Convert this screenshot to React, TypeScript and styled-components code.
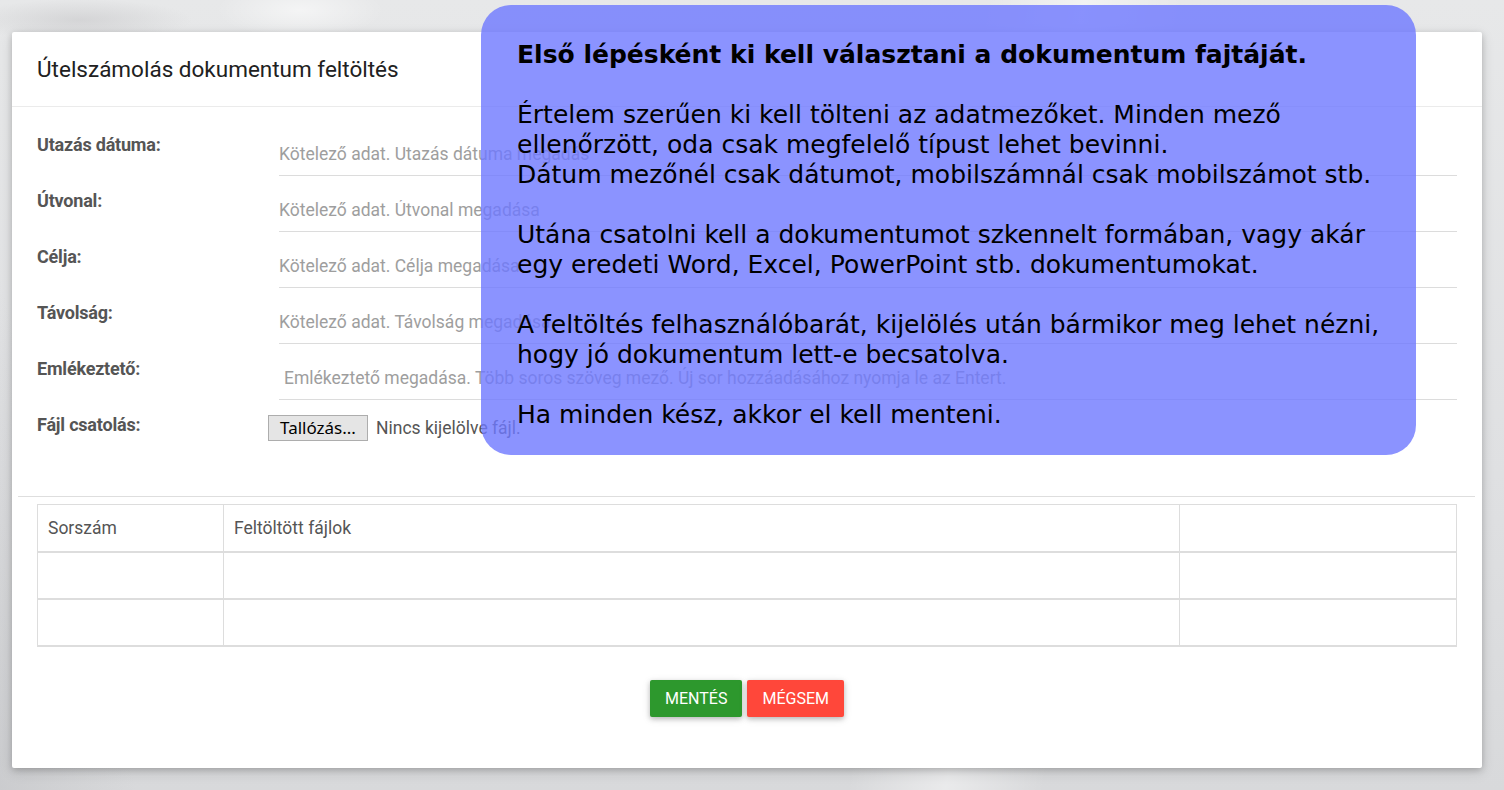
import React from "react";
import styled, { createGlobalStyle } from "styled-components";

const GlobalStyle = createGlobalStyle`
  html, body {
    margin: 0;
    padding: 0;
    height: 100%;
  }
  body {
    font-family: Roboto, "Liberation Sans", Arial, sans-serif;
    background-color: #e3e4e6;
    background-image:
      radial-gradient(ellipse 120px 40px at 300px 10px, rgba(255,255,255,0.55), rgba(255,255,255,0) 70%),
      radial-gradient(ellipse 160px 30px at 80px 20px, rgba(200,200,202,0.6), rgba(200,200,202,0) 70%),
      linear-gradient(100deg, rgba(255,255,255,0) 60%, rgba(255,255,255,0.45) 66%, rgba(255,255,255,0) 72%),
      linear-gradient(75deg, rgba(190,191,194,0.5) 0%, rgba(190,191,194,0) 8%),
      linear-gradient(180deg, #e7e8e9 0%, #dfe0e2 60%, #d8d9db 100%);
    overflow: hidden;
  }
  #root {
    width: 1504px;
    height: 790px;
  }
`;

const Page = styled.div`
  position: relative;
  box-sizing: border-box;
  width: 1504px;
  height: 790px;
  padding: 32px 22px 22px 12px;
`;

const Card = styled.div`
  box-sizing: border-box;
  width: 1470px;
  height: 736px;
  background: #ffffff;
  border-radius: 2px;
  box-shadow: 0 2px 6px rgba(0, 0, 0, 0.18), 0 4px 14px rgba(0, 0, 0, 0.12);
  display: flex;
  flex-direction: column;
`;

const CardHeader = styled.div`
  box-sizing: border-box;
  height: 75px;
  padding: 0 25px;
  display: flex;
  align-items: center;
  border-bottom: 1px solid #ebebeb;
`;

const Title = styled.h2`
  margin: 0;
  font-family: Roboto, sans-serif;
  font-weight: 400;
  font-size: 22.5px;
  color: #212121;
  padding-bottom: 1px;
`;

const FormBody = styled.div`
  padding: 26px 25px 0 25px;
  display: flex;
  flex-direction: column;
  gap: 13px;
`;

const Row = styled.div`
  display: grid;
  grid-template-columns: 242px 1fr;
  align-items: start;
`;

const Label = styled.label`
  font-family: Roboto, sans-serif;
  font-weight: 700;
  font-size: 18px;
  line-height: 22px;
  color: #555555;
  margin-top: 1px;
  letter-spacing: -0.2px;
`;

const TextInput = styled.input`
  box-sizing: border-box;
  width: 100%;
  height: 43px;
  border: none;
  border-bottom: 1px solid #dcdcdc;
  padding: 0;
  font-family: Roboto, sans-serif;
  font-size: 17.5px;
  color: #333;
  background: transparent;
  outline: none;
  &::placeholder {
    color: #9e9e9e;
  }
`;

const TextArea = styled.textarea`
  box-sizing: border-box;
  width: 100%;
  height: 43px;
  border: none;
  border-bottom: 1px solid #dcdcdc;
  padding: 10px 5px 0 5px;
  resize: none;
  font-family: Roboto, sans-serif;
  font-size: 17.5px;
  line-height: 22px;
  color: #333;
  background: transparent;
  outline: none;
  overflow: hidden;
  &::placeholder {
    color: #9e9e9e;
  }
`;

const FileWrap = styled.div`
  display: flex;
  align-items: center;
  gap: 8px;
  margin-left: -11px;
  margin-top: 2px;
`;

const BrowseButton = styled.button`
  box-sizing: border-box;
  width: 100px;
  height: 26px;
  padding: 0;
  border: 1px solid #adadad;
  border-radius: 0;
  background: #e5e5e5;
  font-family: "Noto Sans", "DejaVu Sans", sans-serif;
  font-size: 17px;
  line-height: 22px;
  color: #000;
  cursor: pointer;
`;

const FileStatus = styled.span`
  font-family: Roboto, sans-serif;
  font-size: 17.5px;
  color: #555555;
`;

const Divider = styled.hr`
  margin: 55px 7px 0 6px;
  border: none;
  border-top: 1px solid #dedede;
  height: 0;
`;

const TableWrap = styled.div`
  padding: 7px 25px 0 25px;
`;

const Table = styled.table`
  width: 100%;
  border-collapse: collapse;
  border: 1px solid #dddddd;
  font-family: Roboto, sans-serif;
  font-size: 17.5px;
  color: #555555;
  table-layout: fixed;
`;

const Th = styled.th<{ $w?: number }>`
  ${(p) => (p.$w ? `width: ${p.$w}px;` : "")}
  box-sizing: border-box;
  height: 47px;
  padding: 0 10px;
  text-align: left;
  font-weight: 400;
  border: 1px solid #dddddd;
  border-bottom: 2px solid #dddddd;
`;

const Td = styled.td`
  box-sizing: border-box;
  height: 47px;
  padding: 0 10px;
  border: 1px solid #dddddd;
  border-bottom: 2px solid #dddddd;
`;

const Actions = styled.div`
  display: flex;
  justify-content: center;
  gap: 5px;
  margin-top: 33px;
`;

const ActionButton = styled.button<{ $color: string }>`
  box-sizing: border-box;
  height: 37px;
  padding: 0 15px;
  border: none;
  border-radius: 2px;
  background: ${(p) => p.$color};
  color: #ffffff;
  font-family: Roboto, sans-serif;
  font-size: 16px;
  font-weight: 400;
  text-transform: uppercase;
  box-shadow: 0 2px 5px rgba(0, 0, 0, 0.22), 0 2px 10px rgba(0, 0, 0, 0.1);
  cursor: pointer;
`;

const HelpBubble = styled.div`
  position: absolute;
  left: 481px;
  top: 5px;
  box-sizing: border-box;
  width: 935px;
  height: 450px;
  padding: 35px 20px 0 36px;
  border-radius: 30px;
  background: rgba(110, 120, 255, 0.8);
  color: #000000;
  font-family: "DejaVu Sans", Verdana, sans-serif;
  font-size: 25px;
  line-height: 30px;
`;

const HelpTitle = styled.p`
  margin: 0 0 30px 0;
  font-weight: 700;
`;

const HelpPara = styled.p`
  margin: 0 0 30px 0;
  font-weight: 400;
`;

const fields = [
  { label: "Utazás dátuma:", placeholder: "Kötelező adat. Utazás dátuma megadás" },
  { label: "Útvonal:", placeholder: "Kötelező adat. Útvonal megadása" },
  { label: "Célja:", placeholder: "Kötelező adat. Célja megadása" },
  { label: "Távolság:", placeholder: "Kötelező adat. Távolság megadása" },
];

export default function App() {
  return (
    <>
      <GlobalStyle />
      <Page>
        <Card>
          <CardHeader>
            <Title>Útelszámolás dokumentum feltöltés</Title>
          </CardHeader>
          <FormBody>
            {fields.map((f) => (
              <Row key={f.label}>
                <Label>{f.label}</Label>
                <TextInput placeholder={f.placeholder} />
              </Row>
            ))}
            <Row>
              <Label>Emlékeztető:</Label>
              <TextArea placeholder="Emlékeztető megadása. Több soros szöveg mező. Új sor hozzáadásához nyomja le az Entert." />
            </Row>
            <Row>
              <Label>Fájl csatolás:</Label>
              <FileWrap>
                <BrowseButton type="button">Tallózás...</BrowseButton>
                <FileStatus>Nincs kijelölve fájl.</FileStatus>
              </FileWrap>
            </Row>
          </FormBody>
          <Divider />
          <TableWrap>
            <Table>
              <thead>
                <tr>
                  <Th $w={186}>Sorszám</Th>
                  <Th>Feltöltött fájlok</Th>
                  <Th $w={277}></Th>
                </tr>
              </thead>
              <tbody>
                <tr>
                  <Td />
                  <Td />
                  <Td />
                </tr>
                <tr>
                  <Td />
                  <Td />
                  <Td />
                </tr>
              </tbody>
            </Table>
          </TableWrap>
          <Actions>
            <ActionButton $color="#2d982d">Mentés</ActionButton>
            <ActionButton $color="#ff473a">Mégsem</ActionButton>
          </Actions>
        </Card>
        <HelpBubble>
          <HelpTitle>Első lépésként ki kell választani a dokumentum fajtáját.</HelpTitle>
          <HelpPara>
            Értelem szerűen ki kell tölteni az adatmezőket. Minden mező
            <br />
            ellenőrzött, oda csak megfelelő típust lehet bevinni.
            <br />
            Dátum mezőnél csak dátumot, mobilszámnál csak mobilszámot stb.
          </HelpPara>
          <HelpPara>
            Utána csatolni kell a dokumentumot szkennelt formában, vagy akár
            <br />
            egy eredeti Word, Excel, PowerPoint stb. dokumentumokat.
          </HelpPara>
          <HelpPara>
            A feltöltés felhasználóbarát, kijelölés után bármikor meg lehet nézni,
            <br />
            hogy jó dokumentum lett-e becsatolva.
          </HelpPara>
          <HelpPara>Ha minden kész, akkor el kell menteni.</HelpPara>
        </HelpBubble>
      </Page>
    </>
  );
}
